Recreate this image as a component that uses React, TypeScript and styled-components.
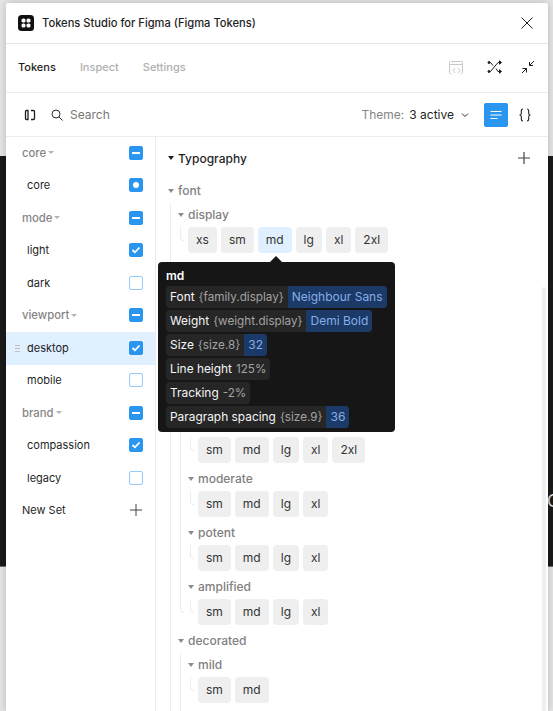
import React from 'react';
import styled, { createGlobalStyle } from 'styled-components';

const GlobalStyle = createGlobalStyle`
  html, body {
    margin: 0;
    height: 100%;
    overflow: hidden;
    font-family: Inter, "Liberation Sans", sans-serif;
  }
  #root { height: 100%; }
`;

const BLUE = '#2b96ef';

const Page = styled.div`
  position: relative;
  width: 553px;
  height: 711px;
  overflow: hidden;
  display: grid;
  grid-template-rows: 156px 411px 1fr;
`;

const Backdrop = styled.div<{ $dark?: boolean }>`
  background: ${p => (p.$dark ? '#1a1a1a' : '#e6e6e6')};
  border-bottom: ${p => (p.$dark ? '1px solid #6e6e6e' : 'none')};
  overflow: hidden;
`;

const BackdropGlyph = styled.span`
  position: absolute;
  left: 547px;
  top: 491px;
  font-size: 17px;
  line-height: 20px;
  color: #e6e6e6;
`;

const Window = styled.div`
  position: absolute;
  left: 6px;
  top: 3px;
  width: 542px;
  height: 708px;
  background: #fff;
  border-radius: 2px 2px 0 0;
  box-shadow: 0 0 8px rgba(0, 0, 0, 0.22);
  display: flex;
  flex-direction: column;
  color: #1f1f1f;
`;

const TitleBar = styled.header`
  height: 41px;
  flex: none;
  box-sizing: border-box;
  padding: 0 14px 1px 12px;
  display: flex;
  align-items: center;
  border-bottom: 1px solid #e6e6e6;
`;

const Title = styled.h1`
  margin: 0 0 0 8px;
  flex: 1;
  font-size: 11.15px;
  font-weight: 500;
  color: #1f1f1f;
`;

const IconButton = styled.span<{ $active?: boolean }>`
  display: flex;
  align-items: center;
  justify-content: center;
  flex: none;
  ${p => (p.$active ? `width: 24px; height: 24px; border-radius: 2px; background: ${BLUE};` : '')}
`;

const TabBar = styled.nav`
  height: 49px;
  flex: none;
  box-sizing: border-box;
  padding: 0 12px 2px 12px;
  display: flex;
  align-items: center;
  gap: 24px;
  border-bottom: 1px solid #ececec;
`;

const Tab = styled.span<{ $active?: boolean }>`
  font-size: 11px;
  font-weight: 500;
  color: ${p => (p.$active ? '#1f1f1f' : '#b0b0b0')};
`;

const TabIcons = styled.div`
  margin-left: auto;
  display: flex;
  align-items: center;
  gap: 17px;
`;

const CodeWindowButton = styled(IconButton)`
  margin-right: 6px;
`;

const Toolbar = styled.div`
  height: 44px;
  flex: none;
  box-sizing: border-box;
  padding: 0 15px 0 18px;
  display: flex;
  align-items: center;
  border-bottom: 1px solid #ececec;
`;

const SearchIconButton = styled(IconButton)`
  margin-left: 15px;
`;

const SearchLabel = styled.span`
  margin-left: 7px;
  flex: 1;
  font-size: 12px;
  color: #777;
`;

const ThemeLabel = styled.span`
  font-size: 12px;
  color: #1f1f1f;
  & > em {
    font-style: normal;
    color: #858585;
    margin-right: 5px;
  }
`;

const ThemeCaret = styled.span`
  display: flex;
  margin: 0 15px 0 7px;
`;

const BraceButton = styled(IconButton)`
  margin-left: 9px;
`;

const Body = styled.div`
  position: relative;
  flex: 1;
  min-height: 0;
  display: flex;
`;

const Sidebar = styled.aside`
  width: 150px;
  flex: none;
  box-sizing: border-box;
  border-right: 1px solid #ececec;
`;

const SetRow = styled.div<{ $selected?: boolean }>`
  position: relative;
  height: 32.5px;
  box-sizing: border-box;
  padding: 0 12px 1px 16px;
  display: flex;
  align-items: center;
  justify-content: space-between;
  background: ${p => (p.$selected ? '#e0f0fe' : 'transparent')};
`;

const SetGroupLabel = styled.span`
  display: flex;
  align-items: center;
  gap: 2px;
  font-size: 11.3px;
  font-weight: 500;
  color: #858585;
`;

const SetLabel = styled.span`
  margin-left: 5px;
  font-size: 11px;
  color: #1f1f1f;
`;

const NewSetLabel = styled.span`
  font-size: 11px;
  color: #1f1f1f;
`;

const SmallCaret = styled.i`
  width: 0;
  height: 0;
  border-left: 3px solid transparent;
  border-right: 3px solid transparent;
  border-top: 3.5px solid #b3b3b3;
`;

const DragHandle = styled.span`
  position: absolute;
  left: 9px;
  top: 13px;
  width: 5px;
  height: 7px;
  background: repeating-linear-gradient(to bottom, #bdbdbd 0 1px, transparent 1px 3px);
`;

const Checkbox = styled.span<{ $on: boolean }>`
  width: 14px;
  height: 14px;
  box-sizing: border-box;
  flex: none;
  border-radius: 2px;
  display: flex;
  align-items: center;
  justify-content: center;
  background: ${p => (p.$on ? BLUE : '#fff')};
  border: 1px solid ${p => (p.$on ? BLUE : '#97cbf7')};
`;

const Content = styled.main`
  flex: 1;
  min-width: 0;
  overflow: hidden;
`;

const SectionHeader = styled.div`
  height: 42px;
  box-sizing: border-box;
  padding: 0 18px 0 12px;
  display: flex;
  align-items: center;
`;

const SectionTitle = styled.h2`
  margin: 0 0 0 4px;
  flex: 1;
  font-size: 12px;
  font-weight: 500;
  color: #1f1f1f;
`;

const Tree = styled.div`
  padding-left: 12px;
`;

const Group = styled.section`
  margin-bottom: 4px;
`;

const GroupHeading = styled.div`
  height: 24px;
  box-sizing: border-box;
  padding-bottom: 1px;
  display: flex;
  align-items: center;
  gap: 4px;
  font-size: 12px;
  font-weight: 500;
  color: #808080;
`;

const HeadingCaret = styled.i<{ $dark?: boolean }>`
  width: 0;
  height: 0;
  flex: none;
  border-left: 3px solid transparent;
  border-right: 3px solid transparent;
  border-top: 4px solid ${p => (p.$dark ? '#1f1f1f' : '#8c8c8c')};
`;

const Nested = styled.div<{ $continues?: boolean }>`
  position: relative;
  padding-left: 10px;
  padding-bottom: ${p => (p.$continues ? '40px' : '0')};
  &::before {
    content: '';
    position: absolute;
    left: 2px;
    top: 0;
    bottom: 12px;
    width: 3px;
    border-left: 1px solid #ececec;
    border-bottom: 1px solid #ececec;
    border-bottom-left-radius: 4px;
  }
`;

const TokenRow = styled.div`
  display: flex;
  gap: 4px;
`;

const Token = styled.button<{ $hover?: boolean }>`
  height: 26px;
  box-sizing: border-box;
  padding: 0 8px 1px;
  border: none;
  border-radius: 4px;
  font-family: inherit;
  font-size: 12px;
  color: #333;
  background: ${p => (p.$hover ? '#e0f0fe' : '#efefef')};
`;

const Scrollbar = styled.span`
  position: absolute;
  right: 2px;
  top: 150px;
  bottom: 0;
  width: 4px;
  border-radius: 2px 2px 0 0;
  background: #efefef;
`;

const Tooltip = styled.div`
  position: absolute;
  left: 152px;
  top: 125px;
  width: 237px;
  height: 170px;
  box-sizing: border-box;
  padding: 7px 8px 5px;
  border-radius: 4px;
  background: #161616;
  &::before {
    content: '';
    position: absolute;
    left: 112px;
    top: -6px;
    border-left: 6px solid transparent;
    border-right: 6px solid transparent;
    border-bottom: 6px solid #161616;
  }
`;

const TooltipTitle = styled.div`
  height: 14px;
  line-height: 14px;
  margin-bottom: 3px;
  font-size: 12px;
  font-weight: 600;
  color: #fff;
`;

const PropertyList = styled.div`
  display: flex;
  flex-direction: column;
  align-items: flex-start;
  gap: 2px;
`;

const Property = styled.div`
  height: 22px;
  display: flex;
  align-items: center;
  border-radius: 4px;
  overflow: hidden;
  background: #262626;
  font-size: 12px;
  line-height: 22px;
  white-space: nowrap;
`;

const PropertyName = styled.span`
  padding-left: 4px;
  font-size: 11.9px;
  color: #f5f5f5;
`;

const PropertyRef = styled.span`
  padding: 0 4px;
  font-size: 11.7px;
  color: #a3a3a3;
`;

const PropertyValue = styled.span`
  padding: 0 4px;
  color: #85aee6;
  background: #1c3a68;
`;

const Line = ({ d, color = '#1f1f1f', size = 16, w = 1 }: { d: string; color?: string; size?: number; w?: number }) => (
  <svg width={size} height={size} viewBox={`0 0 ${size} ${size}`} fill="none" stroke={color} strokeWidth={w}>
    <path d={d} />
  </svg>
);

const Logo = () => (
  <svg width="16" height="16" viewBox="0 0 16 16">
    <rect width="16" height="16" rx="3.5" fill="#111" />
    <rect x="3.5" y="3.5" width="4" height="4" rx="1.6" fill="#fff" />
    <rect x="8.5" y="3.5" width="4" height="4" rx="1.6" fill="#fff" />
    <rect x="3.5" y="8.5" width="4" height="4" rx="1.6" fill="#fff" />
    <rect x="8.5" y="8.5" width="4" height="4" rx="1.6" fill="#fff" />
  </svg>
);

const ShuffleIcon = () => (
  <svg width="16" height="16" viewBox="0 0 16 16" fill="none" stroke="#1f1f1f" strokeWidth="1">
    <path d="M2 12.5h1.5L11 3.5h3M2 3.5h1.5l2.5 3M9 9.5l2 3h3" />
    <path d="M12.5 1.8 14.5 3.5 12.5 5.2ZM12.5 10.8 14.5 12.5 12.5 14.2Z" fill="#1f1f1f" />
    <circle cx="2" cy="3.5" r="1" fill="#1f1f1f" />
    <circle cx="2" cy="12.5" r="1" fill="#1f1f1f" />
  </svg>
);

const CodeWindowIcon = () => (
  <svg width="16" height="16" viewBox="0 0 16 16" fill="none" stroke="#c9c9c9" strokeWidth="1">
    <path d="M3.5 14.5H2.5a1 1 0 0 1-1-1v-10a1 1 0 0 1 1-1h11a1 1 0 0 1 1 1v10a1 1 0 0 1-1 1h-1M1.5 5.5h13M4 4h.5M6.5 4H7" />
    <path d="M7 9l-2 2.5 2 2.5M10 9l2 2.5-2 2.5" />
  </svg>
);

const ListIcon = () => <Line d="M2.5 4.5h11M2.5 8h11M2.5 11.5h7" color="#fff" />;

const BraceIcon = () => (
  <svg width="16" height="16" viewBox="0 0 16 16" fill="none" stroke="#1f1f1f" strokeWidth="1.1">
    <path d="M6 2C4.5 2 4.3 3 4.3 4v2.2C4.3 7.3 3.5 8 2.5 8c1 0 1.8 .7 1.8 1.8V12c0 1 .2 2 1.7 2" />
    <path d="M10 2c1.5 0 1.7 1 1.7 2v2.2c0 1.1 .8 1.8 1.8 1.8-1 0-1.8 .7-1.8 1.8V12c0 1-.2 2-1.7 2" />
  </svg>
);

type SetEntry = { label: string; kind: 'group' | 'item'; state: 'mixed' | 'dot' | 'check' | 'off'; selected?: boolean };

const SETS: SetEntry[] = [
  { label: 'core', kind: 'group', state: 'mixed' },
  { label: 'core', kind: 'item', state: 'dot' },
  { label: 'mode', kind: 'group', state: 'mixed' },
  { label: 'light', kind: 'item', state: 'check' },
  { label: 'dark', kind: 'item', state: 'off' },
  { label: 'viewport', kind: 'group', state: 'mixed' },
  { label: 'desktop', kind: 'item', state: 'check', selected: true },
  { label: 'mobile', kind: 'item', state: 'off' },
  { label: 'brand', kind: 'group', state: 'mixed' },
  { label: 'compassion', kind: 'item', state: 'check' },
  { label: 'legacy', kind: 'item', state: 'off' },
];

const SetCheck = ({ state }: { state: SetEntry['state'] }) => (
  <Checkbox $on={state !== 'off'}>
    {state === 'mixed' && (
      <svg width="8" height="2" viewBox="0 0 8 2">
        <rect width="8" height="2" fill="#fff" />
      </svg>
    )}
    {state === 'dot' && (
      <svg width="6" height="6" viewBox="0 0 6 6">
        <circle cx="3" cy="3" r="3" fill="#fff" />
      </svg>
    )}
    {state === 'check' && (
      <svg width="10" height="8" viewBox="0 0 10 8" fill="none" stroke="#fff" strokeWidth="1.8">
        <path d="M1.5 4 4 6.3 8.5 1.5" />
      </svg>
    )}
  </Checkbox>
);

type TokenGroup = { name: string; tokens?: string[]; children?: TokenGroup[]; continues?: boolean };

const FIVE = ['sm', 'md', 'lg', 'xl', '2xl'];
const FOUR = ['sm', 'md', 'lg', 'xl'];

const TREE: TokenGroup = {
  name: 'font',
  children: [
    { name: 'display', tokens: ['xs', 'sm', 'md', 'lg', 'xl', '2xl'] },
    {
      name: 'heading',
      children: [
        { name: 'mild', tokens: FIVE },
        { name: 'moderate', tokens: FOUR },
      ],
    },
    {
      name: 'body',
      children: [
        { name: 'mild', tokens: FIVE },
        { name: 'moderate', tokens: FOUR },
        { name: 'potent', tokens: FOUR },
        { name: 'amplified', tokens: FOUR },
      ],
    },
    {
      // list runs on below the fold, so its guide line must too
      name: 'decorated',
      continues: true,
      children: [{ name: 'mild', tokens: ['sm', 'md'] }],
    },
  ],
};

const TreeGroup = ({ group, path }: { group: TokenGroup; path: string }) => (
  <Group>
    <GroupHeading>
      <HeadingCaret />
      {group.name}
    </GroupHeading>
    <Nested $continues={group.continues}>
      {group.tokens && (
        <TokenRow>
          {group.tokens.map(t => (
            <Token key={t} $hover={path === 'font/display' && t === 'md'}>
              {t}
            </Token>
          ))}
        </TokenRow>
      )}
      {group.children?.map(c => (
        <TreeGroup key={c.name} group={c} path={`${path}/${c.name}`} />
      ))}
    </Nested>
  </Group>
);

const PROPERTIES = [
  { name: 'Font', ref: '{family.display}', value: 'Neighbour Sans' },
  { name: 'Weight', ref: '{weight.display}', value: 'Demi Bold' },
  { name: 'Size', ref: '{size.8}', value: '32' },
  { name: 'Line height', ref: '125%' },
  { name: 'Tracking', ref: '-2%' },
  { name: 'Paragraph spacing', ref: '{size.9}', value: '36' },
];

export default function App() {
  return (
    <>
      <GlobalStyle />
      <Page>
        <Backdrop />
        <Backdrop $dark />
        <Backdrop />
        <BackdropGlyph>C</BackdropGlyph>
        <Window>
          <TitleBar>
            <Logo />
            <Title>Tokens Studio for Figma (Figma Tokens)</Title>
            <IconButton>
              <Line size={14} d="M1.5 1.5l11 11M12.5 1.5l-11 11" />
            </IconButton>
          </TitleBar>
          <TabBar>
            <Tab $active>Tokens</Tab>
            <Tab>Inspect</Tab>
            <Tab>Settings</Tab>
            <TabIcons>
              <CodeWindowButton>
                <CodeWindowIcon />
              </CodeWindowButton>
              <IconButton>
                <ShuffleIcon />
              </IconButton>
              <IconButton>
                <Line d="M14 2 9.5 6.5M9.5 3v3.5H13M2 14l4.5-4.5M2.5 9.5h4v4" />
              </IconButton>
            </TabIcons>
          </TabBar>
          <Toolbar>
            <IconButton>
              <Line size={12} w={1.3} d="M4 1.5H2.5a1 1 0 0 0-1 1v7a1 1 0 0 0 1 1H4zM7 1.5h2.5a1 1 0 0 1 1 1v7a1 1 0 0 1-1 1H7" />
            </IconButton>
            <SearchIconButton>
              <Line size={12} color="#333" d="M5 1a4 4 0 1 1 0 8 4 4 0 0 1 0-8zM8 8l3.5 3.5" />
            </SearchIconButton>
            <SearchLabel>Search</SearchLabel>
            <ThemeLabel>
              <em>Theme:</em>3 active
            </ThemeLabel>
            <ThemeCaret>
              <Line size={8} color="#333" d="M1 2.5 4 5.5 7 2.5" />
            </ThemeCaret>
            <IconButton $active>
              <ListIcon />
            </IconButton>
            <BraceButton>
              <BraceIcon />
            </BraceButton>
          </Toolbar>
          <Body>
            <Sidebar>
              {SETS.map((s, i) => (
                <SetRow key={i} $selected={s.selected}>
                  {s.selected && <DragHandle />}
                  {s.kind === 'group' ? (
                    <SetGroupLabel>
                      {s.label}
                      <SmallCaret />
                    </SetGroupLabel>
                  ) : (
                    <SetLabel>{s.label}</SetLabel>
                  )}
                  <SetCheck state={s.state} />
                </SetRow>
              ))}
              <SetRow>
                <NewSetLabel>New Set</NewSetLabel>
                <Line size={14} color="#444" d="M7 1v12M1 7h12" />
              </SetRow>
            </Sidebar>
            <Content>
              <SectionHeader>
                <HeadingCaret $dark />
                <SectionTitle>Typography</SectionTitle>
                <Line size={12} color="#444" w={1.2} d="M6 0v12M0 6h12" />
              </SectionHeader>
              <Tree>
                <TreeGroup group={TREE} path="font" />
              </Tree>
            </Content>
            <Scrollbar />
            <Tooltip>
              <TooltipTitle>md</TooltipTitle>
              <PropertyList>
                {PROPERTIES.map(p => (
                  <Property key={p.name}>
                    <PropertyName>{p.name}</PropertyName>
                    <PropertyRef>{p.ref}</PropertyRef>
                    {p.value && <PropertyValue>{p.value}</PropertyValue>}
                  </Property>
                ))}
              </PropertyList>
            </Tooltip>
          </Body>
        </Window>
      </Page>
    </>
  );
}
